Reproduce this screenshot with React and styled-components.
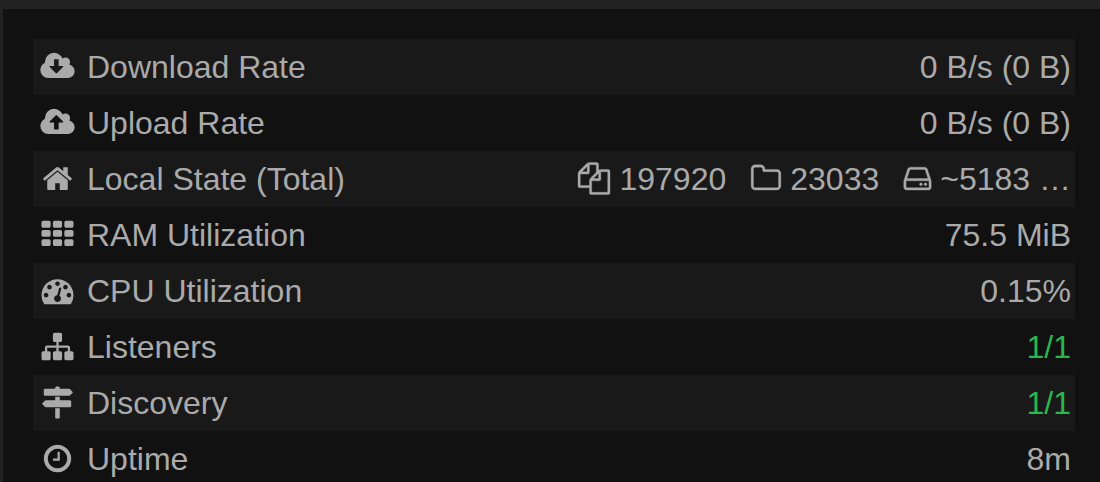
import React from 'react';
import styled, { createGlobalStyle } from 'styled-components';

const GlobalStyle = createGlobalStyle`
    html {
        background: #222222;
    }

    body {
        margin: 0;
        overflow-x: hidden;
        color: #aaaaaa;
        font: 32px/46px "Liberation Sans", Arial, sans-serif;
    }
`;

const Page = styled.main`
    padding: 9px 0 0 3px;
`;

const Panel = styled.section`
    padding: 30px 25px 0 30px;
    background: #111111;
`;

const StatusTable = styled.table`
    width: 100%;
    border-collapse: collapse;
`;

const Row = styled.tr`
    &:nth-child(odd) {
        background: #191919;
    }
`;

const Label = styled.th`
    padding: 5px 4px;
    font-weight: normal;
    text-align: left;
    white-space: nowrap;
`;

const Value = styled.td`
    padding: 5px 4px;
    color: ${props => props.$ok ? '#29b74e' : 'inherit'};
    text-align: right;
    white-space: nowrap;
`;

const StateList = styled.ul`
    display: flex;
    justify-content: flex-end;
    gap: 25px;
    margin: 0;
    padding: 0;
    list-style: none;
`;

const Glyph = styled.svg`
    height: 32px;
    margin-right: 9px;
    vertical-align: -5px;
    fill: currentColor;
    stroke: currentColor;
    stroke-width: ${props => props.$outline ? 20 : 0};
`;

const cloud = 'M1920 384q0 -159 -112.5 -271.5t-271.5 -112.5h-1088q-185 0 -316.5 131.5t-131.5 316.5q0 130 70 240t188 165q-2 30 -2 43q0 212 150 362t362 150q156 0 285.5 -87t188.5 -231q71 62 166 62q106 0 181 -75t75 -181q0 -76 -41 -138q130 -31 213.5 -135.5t83.5 -238.5z';

const gridCell = (x, y) => `M${x} ${y}v-192q0 -40 -28 -68t-68 -28h-320q-40 0 -68 28t-28 68v192q0 40 28 68t68 28h320q40 0 68 -28t28 -68z`;

const dialDot = (x, y) => `M${x} ${y}q0 53 -37.5 90.5t-90.5 37.5t-90.5 -37.5t-37.5 -90.5t37.5 -90.5t90.5 -37.5t90.5 37.5t37.5 90.5z`;

const driveDot = (x) => `M${x} 320q0 -33 -23.5 -56.5t-56.5 -23.5t-56.5 23.5t-23.5 56.5t23.5 56.5t56.5 23.5t56.5 -23.5t23.5 -56.5z`;

// Drawn with y pointing up and the text baseline at 0, 56 units to a pixel.
const icons = {
    download: {
        width: 1920,
        path: 'M1280 640q0 13 -9.5 22.5t-22.5 9.5h-224v352q0 13 -9.5 22.5t-22.5 9.5h-192q-13 0 -22.5 -9.5t-9.5 -22.5v-352h-224q-14 0 -23 -9t-9 -23q0 -14 9 -23l352 -352q9 -9 23 -9t23 9l351 351q10 12 10 24z' + cloud,
    },
    upload: {
        width: 1920,
        path: 'M1280 672q0 14 -9 23l-352 352q-9 9 -23 9t-23 -9l-351 -351q-10 -12 -10 -24q0 -14 9 -23t23 -9h224v-352q0 -13 9.5 -22.5t22.5 -9.5h192q13 0 22.5 9.5t9.5 22.5v352h224q13 0 22.5 9.5t9.5 22.5z' + cloud,
    },
    home: {
        width: 1664,
        path: 'M1408 544v-480q0 -26 -19 -45t-45 -19h-384v384h-256v-384h-384q-26 0 -45 19t-19 45v480q0 1 0.5 3t0.5 3l575 474l575 -474q1 -2 1 -6zM1631 613l-62 -74q-8 -9 -21 -11h-3q-13 0 -21 7l-692 577l-692 -577q-12 -8 -24 -7q-13 2 -21 11l-62 74q-8 10 -7 23.5t11 21.5l719 599q32 26 76 26t76 -26l244 -204v195q0 14 9 23t23 9h192q14 0 23 -9t9 -23v-408l219 -182q10 -8 11 -21.5t-7 -23.5z',
    },
    grid: {
        width: 1792,
        path: [288, 800, 1312].map(y => [512, 1152, 1792].map(x => gridCell(x, y)).join('')).join(''),
    },
    dial: {
        width: 1792,
        path: dialDot(384, 384) + dialDot(576, 832)
            + 'M1004 351l101 382q6 26 -7.5 48.5t-38.5 29.5t-48 -6.5t-30 -39.5l-101 -382q-60 -5 -107 -43.5t-63 -98.5q-20 -77 20 -146t117 -89t146 20t89 117q16 60 -6 117t-72 91z'
            + dialDot(1664, 384) + dialDot(1024, 1024) + dialDot(1472, 832)
            + 'M1792 384q0 -261 -141 -483q-19 -29 -54 -29h-1402q-35 0 -54 29q-141 221 -141 483q0 182 71 348t191 286t286 191t348 71t348 -71t286 -191t191 -286t71 -348z',
    },
    sitemap: {
        width: 1792,
        path: 'M1792 288v-320q0 -40 -28 -68t-68 -28h-320q-40 0 -68 28t-28 68v320q0 40 28 68t68 28h96v192h-512v-192h96q40 0 68 -28t28 -68v-320q0 -40 -28 -68t-68 -28h-320q-40 0 -68 28t-28 68v320q0 40 28 68t68 28h96v192h-512v-192h96q40 0 68 -28t28 -68v-320q0 -40 -28 -68t-68 -28h-320q-40 0 -68 28t-28 68v320q0 40 28 68t68 28h96v192q0 52 38 90t90 38h512v192h-96q-40 0 -68 28t-28 68v320q0 40 28 68t68 28h320q40 0 68 -28t28 -68v-320q0 -40 -28 -68t-68 -28h-96v-192h512q52 0 90 -38t38 -90v-192h96q40 0 68 -28t28 -68z',
    },
    signs: {
        width: 1792,
        path: 'M1745 1239q10 -10 10 -23t-10 -23l-141 -141q-28 -28 -68 -28h-1344q-26 0 -45 19t-19 45v256q0 26 19 45t45 19h576v64q0 26 19 45t45 19h128q26 0 45 -19t19 -45v-64h512q40 0 68 -28zM768 320h256v-512q0 -26 -19 -45t-45 -19h-128q-26 0 -45 19t-19 45v512zM1600 768q26 0 45 -19t19 -45v-256q0 -26 -19 -45t-45 -19h-1344q-40 0 -68 28l-141 141q-10 10 -10 23t10 23l141 141q28 28 68 28h512v192h256v-192h576z',
    },
    clock: {
        width: 1536,
        path: 'M896 992v-448q0 -14 -9 -23t-23 -9h-320q-14 0 -23 9t-9 23v64q0 14 9 23t23 9h224v352q0 14 9 23t23 9h64q14 0 23 -9t9 -23zM1312 640q0 148 -73 273t-198 198t-273 73t-273 -73t-198 -198t-73 -273t73 -273t198 -198t273 -73t273 73t198 198t73 273zM1536 640q0 -209 -103 -385.5t-279.5 -279.5t-385.5 -103t-385.5 103t-279.5 279.5t-103 385.5t103 385.5t279.5 279.5t385.5 103t385.5 -103t279.5 -279.5t103 -385.5z',
    },
    files: {
        width: 1792,
        outline: true,
        path: 'M1696 1152q40 0 68 -28t28 -68v-1216q0 -40 -28 -68t-68 -28h-960q-40 0 -68 28t-28 68v288h-544q-40 0 -68 28t-28 68v672q0 40 20 88t48 76l408 408q28 28 76 48t88 20h416q40 0 68 -28t28 -68v-328q68 40 128 40h416zM1152 939l-299 -299h299v299zM512 1323l-299 -299h299v299zM708 676l316 316v416h-384v-416q0 -40 -28 -68t-68 -28h-416v-640h512v256q0 40 20 88t48 76zM1664 -128v1152h-384v-416q0 -40 -28 -68t-68 -28h-416v-640h896z',
    },
    folder: {
        width: 1664,
        outline: true,
        path: 'M1536 224v704q0 40 -28 68t-68 28h-704q-40 0 -68 28t-28 68v64q0 40 -28 68t-68 28h-320q-40 0 -68 -28t-28 -68v-960q0 -40 28 -68t68 -28h1216q40 0 68 28t28 68zM1664 928v-704q0 -92 -66 -158t-158 -66h-1216q-92 0 -158 66t-66 158v960q0 92 66 158t158 66h320q92 0 158 -66t66 -158v-32h672q92 0 158 -66t66 -158z',
    },
    drive: {
        width: 1536,
        outline: true,
        path: driveDot(1040) + driveDot(1296)
            + 'M1408 160v320q0 13 -9.5 22.5t-22.5 9.5h-1216q-13 0 -22.5 -9.5t-9.5 -22.5v-320q0 -13 9.5 -22.5t22.5 -9.5h1216q13 0 22.5 9.5t9.5 22.5zM178 640h1180l-157 482q-4 13 -16 21.5t-26 8.5h-782q-14 0 -26 -8.5t-16 -21.5zM1536 480v-320q0 -66 -47 -113t-113 -47h-1216q-66 0 -113 47t-47 113v320q0 25 16 75l197 606q17 53 63 86t101 33h782q55 0 101 -33t63 -86l197 -606q16 -50 16 -75z',
    },
};

/*
 * fixed centres the icon in a 41px column, so that the labels line up
 */
const Icon = ({ name, fixed }) => {
    const { width, path, outline } = icons[name];
    const px = fixed ? 41 : Math.round(width / 56);
    const left = (width - px * 56) / 2;

    return (
        <Glyph $outline={outline} width={px} viewBox={`${left} -1512 ${px * 56} 1792`} overflow="visible" aria-hidden="true">
            <path transform="scale(1 -1)" fillRule="evenodd" d={path} />
        </Glyph>
    );
};

const localState = [
    { icon: 'files', value: '197920' },
    { icon: 'folder', value: '23033' },
    { icon: 'drive', value: '~5183 …' },
];

const LocalState = () => (
    <StateList>
        {localState.map(item => (
            <li key={item.icon}><Icon name={item.icon} />{item.value}</li>
        ))}
    </StateList>
);

const rows = [
    { icon: 'download', label: 'Download Rate', value: '0 B/s (0 B)' },
    { icon: 'upload', label: 'Upload Rate', value: '0 B/s (0 B)' },
    { icon: 'home', label: 'Local State (Total)', value: <LocalState /> },
    { icon: 'grid', label: 'RAM Utilization', value: '75.5 MiB' },
    { icon: 'dial', label: 'CPU Utilization', value: '0.15%' },
    { icon: 'sitemap', label: 'Listeners', value: '1/1', ok: true },
    { icon: 'signs', label: 'Discovery', value: '1/1', ok: true },
    { icon: 'clock', label: 'Uptime', value: '8m' },
];

export default function App() {
    return (
        <Page>
            <GlobalStyle />
            <Panel>
                <StatusTable>
                    <tbody>
                        {rows.map(row => (
                            <Row key={row.label}>
                                <Label scope="row"><Icon name={row.icon} fixed />{row.label}</Label>
                                <Value $ok={row.ok}>{row.value}</Value>
                            </Row>
                        ))}
                    </tbody>
                </StatusTable>
            </Panel>
        </Page>
    );
}
